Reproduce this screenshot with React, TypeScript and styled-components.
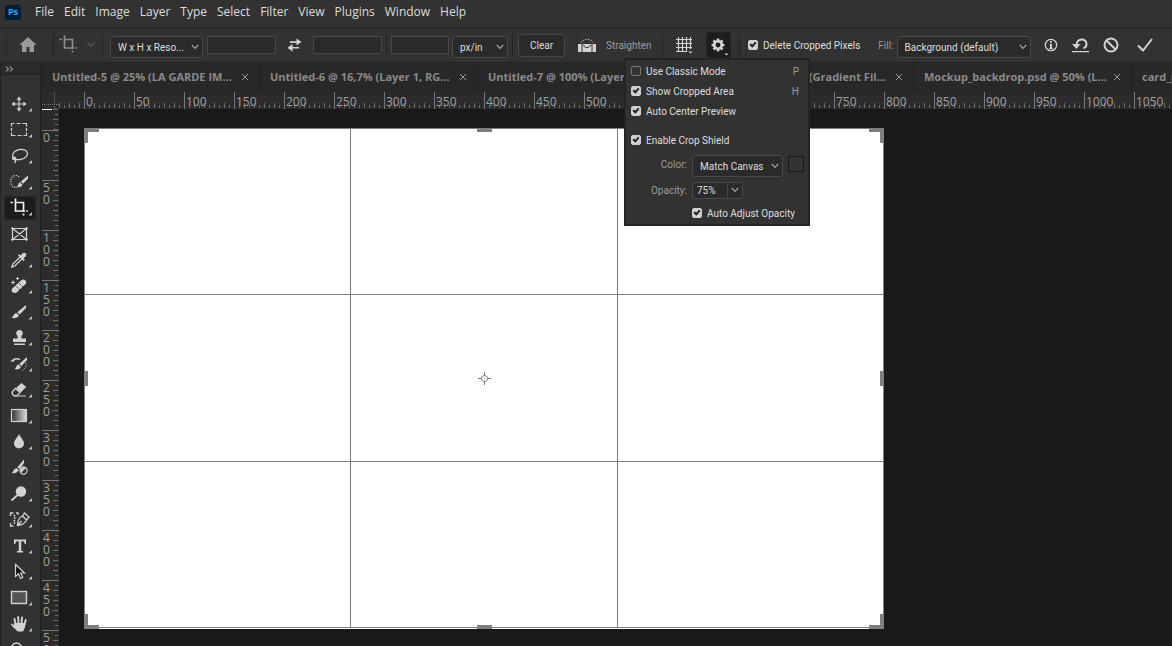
import React, { useState } from "react";
import styled, { createGlobalStyle, css } from "styled-components";

const color = {
  bar: "#323232",
  edge: "#242424",
  tabs: "#282828",
  ruler: "#2b2b2b",
  canvas: "#191919",
  field: "#2a2a2a",
  line: "#484848",
  text: "#dedede",
  muted: "#9d9d9d",
  icon: "#d2d2d2",
  guide: "#7f7f7f",
};

const GlobalStyle = createGlobalStyle`
  *, *::before, *::after { box-sizing: border-box; }
  body {
    margin: 0;
    background: ${color.canvas};
    color: ${color.text};
    font-family: "Open Sans", "Noto Sans", sans-serif;
    font-size: 10px;
  }
  button, input, select { font: inherit; color: inherit; margin: 0; }
  svg { display: block; flex: none; }
`;

const App = styled.div`
  display: flex;
  flex-direction: column;
  height: 100vh;
  overflow: hidden;
`;

/* ---------- menu bar ---------- */

const MenuBar = styled.nav`
  display: flex;
  flex: none;
  align-items: center;
  height: 29px;
  padding: 0 5px 4px;
  background: ${color.bar};
  border-bottom: 1px solid ${color.edge};
`;

const Logo = styled.span`
  display: grid;
  place-items: center;
  width: 16px;
  height: 15px;
  margin-right: 9px;
  border-radius: 3px;
  background: #001e36;
  color: #31a8ff;
  font-size: 9px;
  font-weight: 700;
  line-height: 12px;
`;

const MenuItem = styled.button`
  padding: 0 5px;
  border: 0;
  background: none;
  font-size: 12px;
  line-height: 16px;
`;

/* ---------- options bar ---------- */

const OptionsBar = styled.div`
  position: relative;
  z-index: 2;
  display: flex;
  flex: none;
  align-items: center;
  height: 34px;
  padding-bottom: 1px;
  background: ${color.bar};
  border-bottom: 1px solid ${color.edge};
  font-family: Roboto, "Open Sans", sans-serif;
  white-space: nowrap;
`;

const Group = styled.div<{ $pad: string; $gap?: number; $first?: boolean }>`
  display: flex;
  flex: none;
  align-items: center;
  height: 24px;
  gap: ${(p) => p.$gap ?? 0}px;
  padding: ${(p) => p.$pad};
  border-left: ${(p) => (p.$first ? "0" : `1px solid ${color.edge}`)};
`;

const Grip = styled.span<{ $across?: boolean }>`
  width: ${(p) => (p.$across ? 20 : 4)}px;
  height: ${(p) => (p.$across ? 4 : 20)}px;
  background: ${(p) =>
    p.$across
      ? "repeating-linear-gradient(90deg, #292929 0 1px, transparent 1px 2px)"
      : "repeating-linear-gradient(#292929 0 1px, transparent 1px 2px)"};
`;

const IconButton = styled.button<{ $w?: number }>`
  display: flex;
  justify-content: center;
  padding: 0;
  border: 0;
  width: ${(p) => p.$w ?? 18}px;
  background: none;
  color: ${color.icon};
`;

const TextField = styled.input<{ $w: number }>`
  width: ${(p) => p.$w}px;
  height: 18px;
  padding: 0 4px;
  border: 1px solid ${color.line};
  border-radius: 1px;
  background: ${color.field};
`;

const SelectBox = styled.span<{ $w: number }>`
  display: grid;
  grid-template-columns: 1fr 8px;
  align-items: center;
  width: ${(p) => p.$w}px;
  height: 22px;
  margin-top: 4px;
  padding-right: 3px;
  border: 1px solid ${color.line};
  border-radius: 3px;
  background: ${color.field};

  select {
    grid-area: 1 / 1 / 2 / 3;
    appearance: none;
    width: 100%;
    height: 20px;
    padding: 0 0 0 7px;
    border: 0;
    background: none;
    outline: 0;
  }
  svg {
    grid-area: 1 / 2;
    pointer-events: none;
  }
`;

const ClearButton = styled.button`
  width: 47px;
  height: 23px;
  padding: 0;
  border: 1px solid ${color.line};
  border-radius: 3px;
  background: ${color.field};
`;

const Muted = styled.label`
  color: ${color.muted};
`;

const StraightenButton = styled.button`
  display: flex;
  align-items: center;
  gap: 10px;
  width: 76px;
  padding: 0;
  border: 0;
  background: none;
  color: ${color.muted};
`;

const GearAnchor = styled.div`
  position: relative;
`;

const GearButton = styled.button`
  display: grid;
  place-items: center;
  width: 25px;
  height: 26px;
  padding: 0;
  border: 1px solid #222;
  border-radius: 3px;
  background: #1d1d1d;
  color: ${color.icon};
`;

const Check = styled.label`
  display: flex;
  align-items: center;
  gap: 5px;

  input {
    appearance: none;
    flex: none;
    width: 10px;
    height: 10px;
    border: 1px solid #757575;
    border-radius: 2px;
    background: ${color.bar};
  }
  input:checked {
    border-color: #d0d0d0;
    background: #d0d0d0;
  }
  input:checked::after {
    content: "";
    display: block;
    box-sizing: content-box;
    width: 2px;
    height: 4px;
    margin-left: 2px;
    border: solid #222;
    border-width: 0 2px 2px 0;
    transform: rotate(42deg);
  }
`;

/* ---------- crop settings pop-up ---------- */

const Popup = styled.div`
  position: absolute;
  top: 100%;
  left: -82px;
  width: 186px;
  padding: 1px 3px 1px 5px;
  border: 2px solid #242424;
  background: ${color.bar};
`;

const PopupRow = styled.div<{ $top?: number; $h?: number; $gap?: number }>`
  display: flex;
  align-items: center;
  height: ${(p) => p.$h ?? 20}px;
  margin-top: ${(p) => p.$top ?? 0}px;
  gap: ${(p) => p.$gap ?? 5}px;
`;

const Shortcut = styled.kbd`
  margin-left: auto;
  padding-right: 6px;
  color: ${color.muted};
  font-family: inherit;
`;

const PopupLabel = styled(Muted)`
  width: 56px;
  text-align: right;
`;

const Swatch = styled.button`
  width: 16px;
  height: 16px;
  padding: 0;
  border: 1px solid #191919;
  background: ${color.bar};
`;

const Combo = styled.span`
  display: flex;
  height: 17px;
  width: 51px;
  border: 1px solid ${color.line};
  border-radius: 2px;
  background: ${color.field};

  input {
    width: 34px;
    padding: 0 4px;
    border: 0;
    background: none;
  }
  button {
    display: grid;
    flex: 1;
    place-items: center;
    padding: 0;
    border: 0;
    border-left: 1px solid ${color.line};
    background: none;
    color: ${color.muted};
  }
`;

const Indent = styled.div`
  padding-left: 61px;
`;

/* ---------- tool column ---------- */

const Workspace = styled.div`
  display: flex;
  flex: 1;
  min-height: 0;
`;

const ToolColumn = styled.aside`
  display: flex;
  flex: none;
  flex-direction: column;
  align-items: center;
  width: 42px;
  padding-right: 2px;
  border-left: 1px solid ${color.edge};
  border-right: 2px solid ${color.edge};
  background: ${color.bar};
  overflow: hidden;
`;

const ToolHeader = styled.button`
  display: flex;
  flex: none;
  align-items: center;
  align-self: stretch;
  height: 12px;
  padding: 0 4px;
  margin: 0 -2px 3px 0;
  border: 0;
  border-bottom: 1px solid ${color.edge};
  background: #2b2b2b;
  color: ${color.icon};
`;

const ToolList = styled.div`
  display: flex;
  flex-direction: column;
  gap: 2px;
  padding-top: 14px;
`;

const Tool = styled.button<{ $active?: boolean }>`
  padding: 0;
  border: 0;
  height: 24px;
  border-radius: 3px;
  color: ${color.icon};
  background: none;
  ${(p) =>
    p.$active &&
    css`
      background: #1c1c1c;
      box-shadow: inset 0 0 0 1px #282828;
      color: #f0f0f0;
    `}
`;

/* ---------- document area ---------- */

const Documents = styled.main`
  display: flex;
  flex: 1;
  flex-direction: column;
  min-width: 0;
`;

const TabStrip = styled.div`
  display: flex;
  flex: none;
  height: 29px;
  overflow: hidden;
  background: ${color.tabs};
`;

const Tab = styled.div<{ $end?: boolean }>`
  display: flex;
  flex: none;
  align-items: center;
  gap: 9px;
  justify-content: ${(p) => (p.$end ? "flex-end" : "flex-start")};
  width: 218px;
  padding: 0 10px 2px;
  border-right: 1px solid #1f1f1f;
  color: #8a8a8a;
  font-size: 11px;
  font-weight: 700;
  white-space: nowrap;
`;

const TabTitle = styled.span<{ $end?: boolean }>`
  flex: ${(p) => (p.$end ? "none" : "1")};
  min-width: 0;
`;

const CloseButton = styled.button`
  padding: 0;
  border: 0;
  background: none;
  color: #9a9a9a;
`;

const TopRuler = styled.div`
  display: flex;
  flex: none;
  height: 17px;
  overflow: hidden;
  background: ${color.ruler};
  color: #a0a0a0;
  font-size: 12px;
  line-height: 19px;
`;

const Corner = styled.div`
  position: relative;
  flex: none;
  width: 17px;
  &::before, &::after {
    content: "";
    position: absolute;
  }
  &::before {
    right: 4px;
    top: 0;
    height: 17px;
    border-left: 1px dotted #777;
  }
  &::after {
    bottom: 4px;
    left: 0;
    width: 17px;
    border-top: 1px dotted #777;
  }
`;

const ticksAcross = css`
  background-image:
    repeating-linear-gradient(90deg, #6c6c6c 0 1px, transparent 1px 10px),
    repeating-linear-gradient(90deg, #6c6c6c 0 1px, transparent 1px 5px);
  background-size: 100% 5px, 100% 3px;
  background-position: 0 11px, 0 13px;
  background-repeat: no-repeat;
`;

const ticksDown = css`
  background-image:
    repeating-linear-gradient(#6c6c6c 0 1px, transparent 1px 10px),
    repeating-linear-gradient(#6c6c6c 0 1px, transparent 1px 5px);
  background-size: 5px 100%, 3px 100%;
  background-position: 11px 0, 13px 0;
  background-repeat: no-repeat;
`;

const TopMark = styled.span<{ $lead?: boolean }>`
  flex: none;
  width: ${(p) => (p.$lead ? 25 : 50)}px;
  padding-left: 1px;
  border-left: ${(p) => (p.$lead ? "0" : "1px solid #777")};
  background-origin: border-box;
  ${ticksAcross}
`;

const Stage = styled.div`
  display: flex;
  flex: 1;
  min-height: 0;
`;

const SideRuler = styled.div`
  flex: none;
  width: 17px;
  overflow: hidden;
  background: ${color.ruler};
  color: #a0a0a0;
  font-size: 12px;
  line-height: 12px;
`;

const SideMark = styled.div`
  height: 50px;
  border-top: 1px solid #777;
  padding: 1px 8px 0 1px;
  word-break: break-all;
  background-origin: border-box;
  ${ticksDown}
`;

const SideLead = styled.div`
  height: 21px;
  ${ticksDown}

  &::before {
    content: "";
    display: block;
    width: 10px;
    height: 1px;
    background: #fff;
  }
`;

const Canvas = styled.div`
  flex: 1;
  min-width: 0;
  padding: 19px 0 0 25px;
  overflow: hidden;
  background: ${color.canvas};
`;

const Artboard = styled.div`
  position: relative;
  display: grid;
  grid-template: repeat(3, 1fr) / repeat(3, 1fr);
  width: 800px;
  height: 501px;
  padding: 1px 1px 2px;
  gap: 1px;
  background: linear-gradient(${color.guide}, ${color.guide}) top / 100% 500px no-repeat #fff;
`;

const Third = styled.div`
  background: #fff;
`;

const Handle = styled.span<{ $x: "left" | "mid" | "right"; $y: "top" | "mid" | "bottom" }>`
  position: absolute;
  ${(p) => (p.$x === "mid" ? "left: calc(50% - 7px);" : `${p.$x}: 0;`)}
  ${(p) => (p.$y === "mid" ? "top: calc(50% - 8px);" : `${p.$y}: 0;`)}
  width: ${(p) => (p.$x !== "mid" && p.$y === "mid" ? 4 : 15)}px;
  height: ${(p) => (p.$x === "mid" ? 4 : 15)}px;
  border: 0 solid ${color.guide};
  ${(p) => (p.$x === "mid" || p.$y === "mid" ? `background: ${color.guide};` : "")}
  ${(p) => (p.$x !== "mid" && p.$y !== "mid" ? `border-${p.$x}-width: 4px; border-${p.$y}-width: 4px;` : "")}
`;

const Pivot = styled.svg`
  position: absolute;
  left: calc(50% - 6px);
  top: calc(50% - 7px);
`;

/* ---------- icons ---------- */

const Chevron = ({ tone = "#a4a4a4" }: { tone?: string }) => (
  <svg width="8" height="6" viewBox="0 0 8 6" fill="none" stroke={tone} strokeWidth="1.2">
    <path d="M.8 1 4 4.4 7.2 1" />
  </svg>
);

const Close = () => (
  <svg width="8" height="8" viewBox="0 0 8 8" fill="none" stroke="currentColor">
    <path d="m1 1 6 6M7 1 1 7" />
  </svg>
);

const stroke = { fill: "none", stroke: "currentColor" };

const CropGlyph = () => (
  <g {...stroke} strokeWidth="1.700">
    <path d="M11.500 2.500V15H21M12.500 6.500h7V16M6.500 6.500h2.500M22 15h1.700M19.500 17.500v2" />
  </g>
);

const toolIcons: { name: string; plain?: boolean; art: React.ReactNode }[] = [
  {
    name: "Move",
    art: (
      <g fill="currentColor">
        <path d="M14.400 7h1.200v10h-1.200zM10 11.400h10v1.200H10z" />
        <path d="m15 4.500 2.500 3.200h-5zM15 19.500l2.500-3.200h-5zM7.500 12l3.200-2.500v5zM22.500 12l-3.200-2.500v5z" />
      </g>
    ),
  },
  {
    name: "Rectangular Marquee",
    art: (
      <path
        d="M7.500 8.500v-3h3M12.500 5.500h4M18.500 5.500h4v3M22.500 10v3M22.500 14.500v3h-3M17.500 17.500h-4M11.500 17.500h-4v-3M7.500 13v-3"
        {...stroke}
        strokeWidth="1.200"
      />
    ),
  },
  {
    name: "Lasso",
    art: (
      <g {...stroke} strokeWidth="1.300">
        <ellipse cx="16" cy="10.500" rx="7.500" ry="5" transform="rotate(-12 16 10.500)" />
        <path d="M9.500 13c-2 1-.500 3.200 1.200 2.500s.8-2.500-1-2.200M11 15.500c1 1 .5 2.500-.5 3.500" />
      </g>
    ),
  },
  {
    name: "Quick Selection",
    art: (
      <>
        <path d="M15 7c-1-1.800-5-2.400-7 .5s-1.500 8 1.500 9.500c2 .8 3.500.2 4.500-.6" {...stroke} strokeWidth="1.200" strokeDasharray="1.200 1.200" />
        <path d="M24 5.500v3.200l-5 5-2.200-2.200zM16 12.200l2.500 2.500c-.8 2-3 2.800-5.500 2.200 1.400-.8 1-3.900 3-4.700z" fill="currentColor" />
      </>
    ),
  },
  { name: "Crop", art: <CropGlyph /> },
  {
    name: "Frame",
    plain: true,
    art: <path d="M8.500 6.500h14v11h-14zM8.500 6.500l14 11M22.500 6.500l-14 11M7 6.500h17M7 17.500h17M8.500 5v14M22.500 5v14" {...stroke} strokeWidth="1.200" />,
  },
  {
    name: "Eyedropper",
    art: (
      <>
        <path d="m16 9-7.300 7.300-.9 2.700 2.700-.9L17.800 11" {...stroke} strokeWidth="1.300" />
        <path d="m14 7.500 1.200-1.200 1.500 1.200 2-2.200c2-1.800 4.800.8 3 3l-2.200 2 1.200 1.500-1.200 1.200z" fill="currentColor" />
      </>
    ),
  },
  {
    name: "Spot Healing Brush",
    art: (
      <>
        <path d="M8 17.500c-1-1.500 0-2.700 1-3.700L17.500 6c3-2 6 1.200 4.200 4l-8.500 8c-2 1.500-4 1.200-5.200-.5z" fill="currentColor" />
        <path d="m11.500 11.500 4.500 4.500M14.500 8.500l4.500 4.500" stroke="#323232" strokeDasharray="1.500 1" />
        <path d="M7 8.500h4M9 6.500v4M12 4.500h3M13.500 3v3" {...stroke} />
      </>
    ),
  },
  {
    name: "Brush",
    art: <path d="M22 5v3l-6.500 6.500-2.200-2.200zM12.500 13l2.500 2.500c-1 2.200-4 3-7.500 2.500 2-1 2-4.500 5-5z" fill="currentColor" />,
  },
  {
    name: "Clone Stamp",
    art: <path d="M15.500 4a3.300 3.300 0 0 1 2 6v2.500H22V16H9v-3.500h4.500V10a3.300 3.300 0 0 1 2-6zM10 17.500h11V19H10z" fill="currentColor" />,
  },
  {
    name: "History Brush",
    art: (
      <>
        <path d="M23 5v3l-5.500 6-2.300-2zM14.500 12.500l2.500 2.500c-1 2-3.500 3-6.500 2 2-1 1.500-4 4-4.500zM6 9.500l4.500-3.500v3.500z" fill="currentColor" />
        <path d="M10 7.500c2-1 4-1 6 .2" {...stroke} strokeWidth="1.300" />
        <path d="M22 11c.5 3-1 6-4 7.500" {...stroke} strokeDasharray="1 1.500" />
      </>
    ),
  },
  {
    name: "Eraser",
    art: (
      <>
        <path d="m8.500 13.500 3-3 4.500 4-3 3.200H10c-2-1.500-2.500-2.700-1.500-4.200z" {...stroke} strokeWidth="1.300" />
        <path d="m12 10 5.500-5 4.700 4-5.700 5.800zM10 17.500h12v1H10z" fill="currentColor" />
      </>
    ),
  },
  {
    name: "Gradient",
    art: (
      <>
        <defs>
          <linearGradient id="fade">
            <stop stopColor="#333" />
            <stop offset="1" stopColor="#d8d8d8" />
          </linearGradient>
        </defs>
        <rect x="7.500" y="5.500" width="15" height="12" fill="url(#fade)" stroke="currentColor" strokeWidth="1.200" />
      </>
    ),
  },
  { name: "Blur", art: <path d="M15 4c1.500 3.500 5 6 5 9.500a5 5 0 0 1-10 0C10 10 13.500 7.500 15 4z" fill="currentColor" /> },
  {
    name: "Adjustment Brush",
    plain: true,
    art: (
      <>
        <path d="M20 3.500v3.500l-4.500 6-2.200-1.800zM12.500 12l2.200 2c-.7 2.200-3 3.700-7.200 3.200 2-1 2-4.500 5-5.200z" fill="currentColor" />
        <circle cx="19.500" cy="14.500" r="3.600" {...stroke} strokeWidth="1.200" />
        <path d="M17 17a3.600 3.600 0 0 1 5-5z" fill="currentColor" />
      </>
    ),
  },
  {
    name: "Dodge",
    art: (
      <>
        <circle cx="17" cy="9.500" r="5.200" fill="currentColor" />
        <path d="m13.500 13-6 5.500" {...stroke} strokeWidth="1.800" />
      </>
    ),
  },
  {
    name: "Content-Aware Pen",
    art: (
      <>
        <path d="M6.500 8V5h3M6.500 15v3h3M12 5h2v2" {...stroke} strokeWidth="1.300" />
        <path d="M10 7c2 3-1 6 1 9" {...stroke} strokeWidth="1.800" strokeDasharray="1.500 1" />
        <path d="M13.500 17.500c0-4 1-8 5-9.500l4 4c-1.500 3.500-5 5-9 5.500zl4-4.500M18.500 8l2-3 4.500 4-2.500 3z" {...stroke} strokeWidth="1.300" />
      </>
    ),
  },
  {
    name: "Type",
    art: <path d="M10 5.500h12V10h-1.300c-.3-2-.8-2.700-2.200-2.700h-1.300v8.700c0 .8.400 1.200 2 1.200v1.300h-6.400v-1.300c1.600 0 2-.4 2-1.200V7.300h-1.300c-1.400 0-1.900.7-2.200 2.700H10z" fill="currentColor" />,
  },
  {
    name: "Path Selection",
    art: <path d="M11.500 4.500v12l3-2.700 2 4.700 2.200-1-2-4.500h3.800z" fill="#111" stroke="currentColor" strokeWidth="1.200" />,
  },
  { name: "Rectangle", art: <rect x="7.500" y="5.500" width="15" height="12" fill="#555" stroke="currentColor" strokeWidth="1.400" /> },
  {
    name: "Hand",
    art: (
      <>
        <path d="M11.500 12 10.500 7M14.500 11.500 14.200 5M17.500 11.500 18 5.500M20.500 12.500 21.700 8M10.500 15.500 8 12.500" {...stroke} strokeWidth="1.900" strokeLinecap="round" />
        <path d="M10.500 11h10.800c.3 3-.3 5-2.300 8.500h-5c-1.500-1-3-2.500-4.500-5z" fill="currentColor" />
      </>
    ),
  },
  {
    name: "Zoom",
    plain: true,
    art: <path d="M17 15.500l5 5M12.500 5a5 5 0 1 0 .1 0z" {...stroke} strokeWidth="1.500" />,
  },
];

const GridIcon = () => (
  <svg width="18" height="18" viewBox="0 0 18 18" {...stroke} strokeWidth="1.200">
    <path d="M3.500 1v15M7.500 1v15M11.500 1v15M15.500 1v12M1 3.500h16M1 7.500h16M1 11.500h16M1 15.500h11" />
    <path d="M13.500 15.500h4l-2 2z" fill="currentColor" stroke="none" />
  </svg>
);

const gearTeeth = [0, 45, 90, 135, 180, 225, 270, 315];

const GearIcon = () => (
  <svg width="23" height="24" viewBox="0 0 23 24">
    <circle cx="11" cy="12" r="3.700" fill="none" stroke="currentColor" strokeWidth="2.600" />
    {gearTeeth.map((turn) => (
      <rect key={turn} x="9.700" y="5.600" width="2.600" height="3" fill="currentColor" transform={`rotate(${turn} 11 12)`} />
    ))}
    <path d="M17.500 20.500h4l-2 2z" fill="currentColor" />
  </svg>
);

const menus = ["File", "Edit", "Image", "Layer", "Type", "Select", "Filter", "View", "Plugins", "Window", "Help"];

const tabs = [
  { title: "Untitled-5 @ 25% (LA GARDE IM..." },
  { title: "Untitled-6 @ 16,7% (Layer 1, RG..." },
  { title: "Untitled-7 @ 100% (Layer" },
  { title: "(Gradient Fil...", end: true },
  { title: "Mockup_backdrop.psd @ 50% (L..." },
  { title: "card_p" },
];

const topMarks = Array.from({ length: 22 }, (_, i) => i * 50);
const sideMarks = Array.from({ length: 11 }, (_, i) => i * 50);

function Tick({ label, on = true }: { label: string; on?: boolean }) {
  const [checked, setChecked] = useState(on);
  return (
    <Check>
      <input type="checkbox" checked={checked} onChange={() => setChecked(!checked)} />
      {label}
    </Check>
  );
}

function Select({ label, id, value, width }: { label?: string; id?: string; value: string; width: number }) {
  return (
    <SelectBox $w={width}>
      <select aria-label={label} id={id}>
        <option>{value}</option>
      </select>
      <Chevron />
    </SelectBox>
  );
}

function CropSettings() {
  return (
    <Popup>
      <PopupRow>
        <Tick label="Use Classic Mode" on={false} />
        <Shortcut>P</Shortcut>
      </PopupRow>
      <PopupRow>
        <Tick label="Show Cropped Area" />
        <Shortcut>H</Shortcut>
      </PopupRow>
      <PopupRow>
        <Tick label="Auto Center Preview" />
      </PopupRow>
      <PopupRow $top={9}>
        <Tick label="Enable Crop Shield" />
      </PopupRow>
      <PopupRow $top={2} $h={24}>
        <PopupLabel htmlFor="shield-color">Color:</PopupLabel>
        <Select id="shield-color" value="Match Canvas" width={91} />
        <Swatch aria-label="Shield color" />
      </PopupRow>
      <PopupRow $top={4}>
        <PopupLabel htmlFor="shield-opacity">Opacity:</PopupLabel>
        <Combo>
          <input id="shield-opacity" defaultValue="75%" />
          <button aria-label="Opacity slider">
            <Chevron />
          </button>
        </Combo>
      </PopupRow>
      <PopupRow $top={3}>
        <Indent>
          <Tick label="Auto Adjust Opacity" />
        </Indent>
      </PopupRow>
    </Popup>
  );
}

function Options() {
  return (
    <OptionsBar>
      <Group $first $pad="0 16px 0 4px" $gap={11}>
        <Grip />
        <IconButton aria-label="Home">
          <svg width="18" height="16" viewBox="0 0 18 16" fill="#9a9a9a">
            <path d="M9 0 17.500 8H15v7h-4.500v-5h-3v5H3V8H.5z" />
          </svg>
        </IconButton>
      </Group>
      <Group $pad="0 7px 0 0" $gap={4}>
        <IconButton aria-label="Crop tool presets" $w={29}>
          <svg width="29" height="24" viewBox="1 0 29 24" color="#8c8c8c">
            <CropGlyph />
          </svg>
        </IconButton>
        <Chevron tone="#5c5c5c" />
      </Group>
      <Group $pad="0 4px 0 7px" $gap={4}>
        <Select label="Aspect ratio" value="W x H x Reso..." width={93} />
        <TextField $w={69} aria-label="Width" />
        <IconButton aria-label="Swap width and height" $w={29}>
          <svg width="15" height="14" viewBox="0 0 15 14" fill="currentColor">
            <path d="M3 3.300h6.500V.5L14.500 4 9.500 7.500V4.900H3zM12 8.900H5.500V6L.5 9.700l5 3.700v-2.900H12z" />
          </svg>
        </IconButton>
        <TextField $w={69} aria-label="Height" />
      </Group>
      <Group $pad="0 4px" $gap={3}>
        <TextField $w={58} aria-label="Resolution" />
        <Select label="Resolution unit" value="px/in" width={56} />
      </Group>
      <Group $pad="0 8px 0 5px" $gap={13}>
        <ClearButton>Clear</ClearButton>
        <StraightenButton>
          <svg width="18" height="15" viewBox="0 0 18 15" color={color.icon}>
            <path d="M0 6h3.500v8H0zM14.500 6H18v8h-3.500zM4.500 6h9v8h-9z" fill="currentColor" />
            <path d="M3 4.500C5 .5 13 .5 15 4.500" {...stroke} strokeDasharray="1.200 1.400" />
            <path d="M5.500 7c1 3.500 6 3.500 7 0" fill="none" stroke="#3a3a3a" />
          </svg>
          Straighten
        </StraightenButton>
      </Group>
      <Group $pad="0 8px 0 12px" $gap={13}>
        <IconButton aria-label="Overlay options">
          <GridIcon />
        </IconButton>
        <GearAnchor>
          <GearButton aria-label="Crop options" aria-expanded>
            <GearIcon />
          </GearButton>
          <CropSettings />
        </GearAnchor>
      </Group>
      <Group $pad="0 0 0 8px" $gap={18}>
        <Tick label="Delete Cropped Pixels" />
        <Group $first $pad="0" $gap={3}>
          <Muted htmlFor="fill">Fill:</Muted>
          <Select id="fill" value="Background (default)" width={134} />
        </Group>
      </Group>
      <Group $first $pad="0 0 0 11px" $gap={12}>
        <IconButton aria-label="Information">
          <svg width="14" height="14" viewBox="0 0 14 14">
            <circle cx="7" cy="7" r="5.700" {...stroke} strokeWidth="1.300" />
            <path d="M6 3h2v1.600H6zM5.500 5.700H8V10h.7v1H5.300v-1H6V6.600h-.5z" fill="currentColor" />
          </svg>
        </IconButton>
        <IconButton aria-label="Reset">
          <svg width="18" height="16" viewBox="0 0 18 16">
            <path d="M4.500 8C4.500 1 14.500.5 14.500 7c0 2-1 3.500-3 4.200" {...stroke} strokeWidth="2" />
            <path d="M0 7h8.500L4.500 12zM0 14h17v1.200H0z" fill="currentColor" />
          </svg>
        </IconButton>
        <IconButton aria-label="Cancel">
          <svg width="16" height="16" viewBox="0 0 16 16" {...stroke} strokeWidth="2">
            <circle cx="8" cy="8" r="6.500" />
            <path d="m3.500 3.500 9 9" />
          </svg>
        </IconButton>
        <IconButton aria-label="Commit" $w={26}>
          <svg width="16" height="14" viewBox="0 0 16 14" {...stroke} strokeWidth="2">
            <path d="m1 7.500 5 5L15 1" />
          </svg>
        </IconButton>
      </Group>
    </OptionsBar>
  );
}

function Tools() {
  return (
    <ToolColumn>
      <ToolHeader aria-label="Expand tools">
        <svg width="9" height="6" viewBox="0 0 9 6" {...stroke}>
          <path d="m1 .5 2.500 2.500L1 5.500M5 .5 7.500 3 5 5.500" />
        </svg>
      </ToolHeader>
      <Grip $across />
      <ToolList>
        {toolIcons.map((tool) => (
          <Tool key={tool.name} aria-label={tool.name} $active={tool.name === "Crop"}>
            <svg width="32" height="24" viewBox="0 0 32 24">
              {tool.art}
              {!tool.plain && <path d="M28 16v3.500h-3.500z" fill="#bdbdbd" />}
            </svg>
          </Tool>
        ))}
      </ToolList>
    </ToolColumn>
  );
}

export default function Editor() {
  return (
    <App>
      <GlobalStyle />
      <MenuBar>
        <Logo>Ps</Logo>
        {menus.map((name) => (
          <MenuItem key={name}>{name}</MenuItem>
        ))}
      </MenuBar>
      <Options />
      <Workspace>
        <Tools />
        <Documents>
          <TabStrip>
            {tabs.map((tab) => (
              <Tab key={tab.title} $end={tab.end}>
                <TabTitle $end={tab.end}>{tab.title}</TabTitle>
                <CloseButton aria-label={`Close ${tab.title}`}>
                  <Close />
                </CloseButton>
              </Tab>
            ))}
          </TabStrip>
          <TopRuler>
            <Corner />
            <TopMark $lead />
            {topMarks.map((n) => (
              <TopMark key={n}>{n}</TopMark>
            ))}
          </TopRuler>
          <Stage>
            <SideRuler>
              <SideLead />
              {sideMarks.map((n) => (
                <SideMark key={n}>{n}</SideMark>
              ))}
            </SideRuler>
            <Canvas>
              <Artboard>
                {Array.from({ length: 9 }, (_, i) => (
                  <Third key={i} />
                ))}
                <Handle $x="left" $y="top" />
                <Handle $x="mid" $y="top" />
                <Handle $x="right" $y="top" />
                <Handle $x="left" $y="mid" />
                <Handle $x="right" $y="mid" />
                <Handle $x="left" $y="bottom" />
                <Handle $x="mid" $y="bottom" />
                <Handle $x="right" $y="bottom" />
                <Pivot width="13" height="13" viewBox="0 0 13 13" fill="none" stroke="#777">
                  <circle cx="6.500" cy="6.500" r="3" />
                  <path d="M6.500 0v3.500M6.500 9.500V13M0 6.500h3.500M9.500 6.500H13M6 6.500h1" />
                </Pivot>
              </Artboard>
            </Canvas>
          </Stage>
        </Documents>
      </Workspace>
    </App>
  );
}
